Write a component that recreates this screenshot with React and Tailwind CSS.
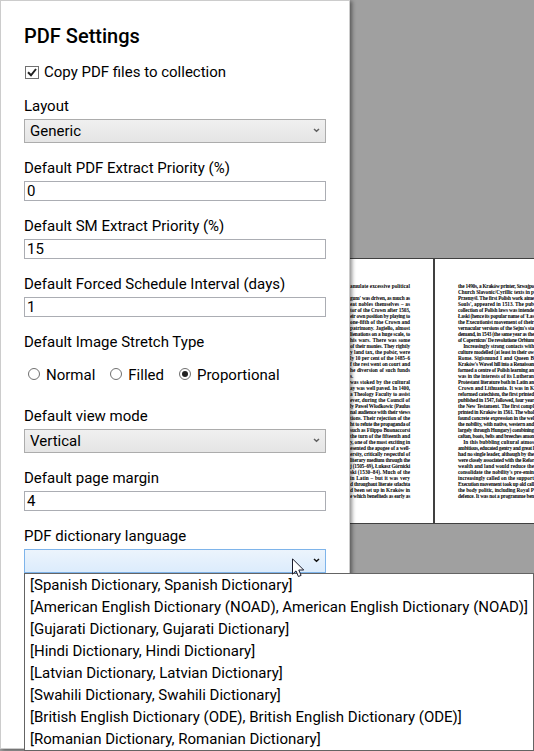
import { useLayoutEffect, useRef, useState } from "react";

const leftPage = [
  "amulate excessive political", "", "gum' was driven, as much as", "eat nobles themselves – as",
  "tor of the Crown after 1503,", "eir own position by playing to", "one-fifth of the Crown and",
  "patrimony. Jagiełło, almost", "lienations on a huge scale, to", "his wars. There was some",
  "of their monies. They rightly", "y land tax, the pobór, were", "ly 10 per cent of the 1485–6",
  "f the rest went on court and", "he diversion of such funds", "s.", "was stoked by the cultural",
  "ay was well paved. In 1400,", "a Theology Faculty to assist", "ever, during the Council of",
  "ly Paweł Włodkowic (Paulus", "nal audience with their views", "tions. Their rejection of the",
  "ht to refute the propaganda of", "such as Filippo Buonaccorsi", "the turn of the fifteenth and",
  "y, one of the most exciting in", "esented the apogee of a well-", "ersity, critically respectful of",
  "literary medium through the", "j (1505–69), Łukasz Górnicki", "ski (1530–84). Much of the",
  "in Latin – but it was very", "d throughout literate szlachta", "d been set up in Kraków in",
  "e which benefiteds as early as",
];

const rightPage = [
  "the 1490s, a Kraków printer, Szwajpo", "Church Slavonic/Cyrillic texts in p", "Przemyśl. The first Polish work aime",
  "Souls', appeared in 1513. The pub", "collection of Polish laws was intende", "Łaski (hence its popular name of 'Łas",
  "the Executionist movement of their", "vernacular versions of the Sejm's sta", "demand, in 1543 (the same year as the",
  "of Copernicus' De revolutione Orbium", "\u2003Increasingly strong contacts with", "culture modelled (at least in their ow",
  "Rome. Sigismund I and Queen B", "Kraków's Wawel hill into a Renaissan", "formed a centre of Polish learning an",
  "was in the interests of its Lutheran", "Protestant literature both in Latin an", "Crown and Lithuania. It was in K",
  "reformed catechism, the first printed", "published in 1547, followed, four year", "the New Testament. The first compl",
  "printed in Kraków in 1561. The whol", "found concrete expression in the wel", "the nobility, with native, western and",
  "largely through Hungary) combining", "caftan, boots, belts and breeches amon", "\u2003In this bubbling cultural atmos",
  "ambitious, educated gentry and great l", "had no single leader, although by the", "were closely associated with the Refor",
  "wealth and land would reduce the", "consolidate the nobility's pre-emin", "increasingly called on the support",
  "Execution movement took up old call", "the body politic, including Royal P", "defence. It was not a programme ben",
];

const dictionaries = [
  "Spanish Dictionary", "American English Dictionary (NOAD)", "Gujarati Dictionary", "Hindi Dictionary",
  "Latvian Dictionary", "Swahili Dictionary", "British English Dictionary (ODE)", "Romanian Dictionary",
];

// A justified line of page text; tightens its tracking when the words exceed the column.
function Line({ text }) {
  const ref = useRef(null);
  const [tracking, setTracking] = useState(0);
  useLayoutEffect(() => {
    const column = ref.current.clientWidth;
    const range = document.createRange();
    range.selectNodeContents(ref.current);
    const natural = range.getBoundingClientRect().width;
    if (natural > column) setTracking((column - natural - 0.3) / text.length);
  }, [text]);
  return (
    <div
      ref={ref}
      className={"h-[6px] whitespace-nowrap " + (text.length > 4 ? "[text-align-last:justify]" : "")}
      style={{ letterSpacing: tracking }}
    >
      {text}
    </div>
  );
}

function Field({ label, children }) {
  return (
    <div className="flex flex-col gap-1">
      <div className="h-[18px] leading-[18px] whitespace-nowrap">{label}</div>
      {children}
    </div>
  );
}

function TextBox({ value }) {
  return <div className="h-5 border border-[#abadb3] bg-white pl-[2px] leading-[18px]">{value}</div>;
}

function Select({ value, active }) {
  return (
    <div
      className={
        "flex h-6 items-center justify-between border pl-[5px] pr-[5px] bg-linear-to-b " +
        (active ? "border-[#7eb4ea] from-[#ecf4fc] to-[#dcecfc]" : "border-[#acacac] from-[#f0f0f0] to-[#e5e5e5]")
      }
    >
      <span className="leading-[22px]">{value}</span>
      <svg width="7" height="5" viewBox="0 0 7 5" className="mb-[1px]">
        <path d="M1 1 L3.5 3.3 L6 1" fill="none" stroke={active ? "#111" : "#606060"} strokeWidth="1.5" />
      </svg>
    </div>
  );
}

function Radio({ label, checked }) {
  return (
    <div className="flex items-center gap-[6px]">
      <span className="mb-[3px] flex size-3 items-center justify-center rounded-full border border-[#707070] bg-white">
        {checked && <span className="size-[6px] rounded-full bg-[#212121]" />}
      </span>
      <span className="leading-[18px]">{label}</span>
    </div>
  );
}

export default function App() {
  return (
    <div className="relative flex h-[751px] w-[534px] overflow-hidden bg-[#a0a0a0] font-['Roboto',sans-serif] text-[15px] text-black">
      <div className="relative z-10 h-[749px] w-[350px] shrink-0 border border-[#cccccc] bg-white pl-[23px] pt-[23px] shadow-[2px_1px_4px_0px_rgba(0,0,0,0.45)]">
        <div className="flex w-[302px] flex-col">
          <h1 className="h-6 text-[20px] font-medium leading-6">PDF Settings</h1>
          <div className="mt-[15px] flex h-[18px] items-center gap-[5px]">
            <span className="ml-[1px] flex h-[13px] w-[14px] items-center justify-center border border-[#707070]">
              <svg width="12" height="11" viewBox="0 0 12 11">
                <path d="M2 5.2 L5 8.3 L10 2" fill="none" stroke="#212121" strokeWidth="2" />
              </svg>
            </span>
            <span className="leading-[18px]">Copy PDF files to collection</span>
          </div>
          <div className="mt-4 flex flex-col gap-4">
            <Field label="Layout"><Select value="Generic" /></Field>
            <Field label="Default PDF Extract Priority (%)"><TextBox value="0" /></Field>
            <Field label="Default SM Extract Priority (%)"><TextBox value="15" /></Field>
            <Field label="Default Forced Schedule Interval (days)"><TextBox value="1" /></Field>
            <Field label="Default Image Stretch Type">
              <div className="flex h-9 items-start gap-[15px] pl-1 pt-[11px]">
                <Radio label="Normal" />
                <Radio label="Filled" />
                <Radio label="Proportional" checked />
              </div>
            </Field>
            <Field label="Default view mode"><Select value="Vertical" /></Field>
            <Field label="Default page margin"><TextBox value="4" /></Field>
            <Field label="PDF dictionary language"><Select value="" active /></Field>
          </div>
        </div>
      </div>

      <div className="mt-[258px] flex h-[266px] flex-1 overflow-hidden border-y border-[#404040] bg-white font-['Liberation_Serif',serif] text-[5.3px] font-bold leading-[6px]">
        <div className="w-[85px] shrink-0 border-r-2 border-[#404040] pr-[23px] pt-[24px]">
          {leftPage.map((t, i) => <Line key={i} text={t} />)}
        </div>
        <div className="w-[99px] shrink-0 pl-[23px] pt-[24px]">
          {rightPage.map((t, i) => <Line key={i} text={t} />)}
        </div>
      </div>

      <div className="absolute left-6 top-[573px] z-20 h-[178px] w-[510px] border border-[#646464] bg-white pl-[5px]">
        {dictionaries.map((d) => (
          <div key={d} className="h-[22px] whitespace-nowrap leading-[22px]">{`[${d}, ${d}]`}</div>
        ))}
      </div>

      <svg className="absolute left-[292px] top-[558px] z-30" width="13" height="20" viewBox="0 0 13 20">
        <path d="M.5 .8 V16.2 L4 12.9 L6.4 18.5 L9.1 17.4 L6.8 12 H11.7 Z" fill="#fff" stroke="#1a1a2a" strokeWidth="1" />
      </svg>
    </div>
  );
}
